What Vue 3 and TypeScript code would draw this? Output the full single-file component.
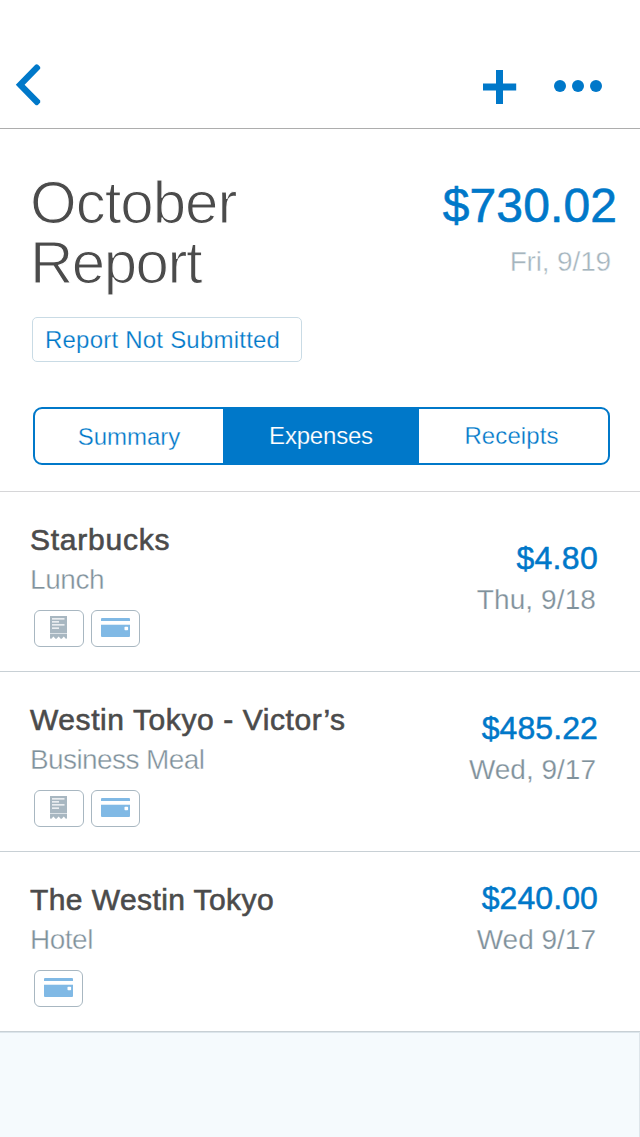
<script setup lang="ts">
import { ref } from 'vue'

interface Label {
  text: string
  tracking: number
}

interface Expense {
  name: Label
  category: Label
  amount: Label
  date: Label
  badges: ('receipt' | 'card')[]
  offset: number
}

const tabs: Label[] = [
  { text: 'Summary', tracking: 0 },
  { text: 'Expenses', tracking: -0.2 },
  { text: 'Receipts', tracking: 0.1 },
]
const active = ref(1)

const expenses: Expense[] = [
  {
    name: { text: 'Starbucks', tracking: 0.75 },
    category: { text: 'Lunch', tracking: -0.4 },
    amount: { text: '$4.80', tracking: 0.3 },
    date: { text: 'Thu, 9/18', tracking: 0.1 },
    badges: ['receipt', 'card'],
    offset: 45,
  },
  {
    name: { text: 'Westin Tokyo - Victor’s', tracking: 0.58 },
    category: { text: 'Business Meal', tracking: -0.6 },
    amount: { text: '$485.22', tracking: 0.1 },
    date: { text: 'Wed, 9/17', tracking: 0 },
    badges: ['receipt', 'card'],
    offset: 35,
  },
  {
    name: { text: 'The Westin Tokyo', tracking: 0.42 },
    category: { text: 'Hotel', tracking: -0.5 },
    amount: { text: '$240.00', tracking: 0.1 },
    date: { text: 'Wed 9/17', tracking: 0 },
    badges: ['card'],
    offset: 25,
  },
]

const spacing = (label: Label) => ({ letterSpacing: `${label.tracking}px` })
</script>

<template>
  <div class="screen">
    <header class="nav">
      <button class="back" aria-label="Back">
        <svg width="26" height="42" viewBox="0 0 26 42">
          <path d="M.8 20.700 20.300.7Q21.700-.4 23.100.7L25.200 2.900 25.200 4.800 9.600 20.700 25.200 36.500 25.200 38.400 23.100 40.700Q21.700 41.800 20.300 40.700z" fill="#0078c9" />
        </svg>
      </button>
      <div class="actions">
        <svg width="34" height="34" viewBox="0 0 34 34">
          <path d="M13 0h7v34h-7zM0 13.600h33.200v6.800H0z" fill="#0078c9" />
        </svg>
        <svg width="48" height="12" viewBox="0 0 48 12" fill="#0078c9">
          <circle cx="6" cy="6" r="6" />
          <circle cx="24" cy="6" r="6" />
          <circle cx="42" cy="6" r="6" />
        </svg>
      </div>
    </header>

    <section class="summary">
      <div class="heading">
        <h1 class="title"><span>October</span><span>Report</span></h1>
        <div class="total">
          <div class="total-amount">$730.02</div>
          <div class="total-date">Fri, 9/19</div>
        </div>
      </div>
      <div class="status">Report Not Submitted</div>
      <nav class="tabs">
        <button
          v-for="(tab, i) in tabs"
          :key="tab.text"
          class="tab"
          :class="{ active: i === active }"
          @click="active = i"
        >
          <span :style="spacing(tab)">{{ tab.text }}</span>
        </button>
      </nav>
    </section>

    <ul class="list">
      <li v-for="item in expenses" :key="item.name.text" class="row">
        <div class="info">
          <div class="name" :style="spacing(item.name)">{{ item.name.text }}</div>
          <div class="category" :style="spacing(item.category)">{{ item.category.text }}</div>
          <div class="badges">
            <span v-for="badge in item.badges" :key="badge" class="badge" :class="badge">
              <svg v-if="badge === 'receipt'" width="17" height="23" viewBox="0 0 17 23">
                <path d="M0 0h17v17H0z" fill="#a8b7c1" />
                <path d="M0 18h17v4.500l-1.200.300-2-2.300-2 2.300h-1.100L8.600 20.500l-2 2.300H5.500L3.400 20.500l-2 2.300L0 22.500z" fill="#a8b7c1" />
                <path d="M0 17h17v1H0z" fill="#dbe2e7" />
                <path d="M2 2.200h12.500v1.300H2zM2 5.300h7v1.200H2zM2 8.300h12.500v1.300H2zM2 11.500h7v1.200H2z" fill="#fff" />
              </svg>
              <svg v-else width="29" height="19" viewBox="0 0 29 19">
                <path d="M1 0h27a1 1 0 0 1 1 1v2H0V1a1 1 0 0 1 1-1z" fill="#80b9e5" />
                <path d="M0 6h29v1H0z" fill="#dcecf8" />
                <path d="M0 7h29v11a1 1 0 0 1-1 1H1a1 1 0 0 1-1-1z" fill="#80b9e5" />
                <rect x="23.500" y="8.800" width="3.600" height="3.400" rx=".8" fill="#fff" />
              </svg>
            </span>
          </div>
        </div>
        <div class="cost" :style="{ paddingTop: `${item.offset}px` }">
          <div class="amount" :style="spacing(item.amount)">{{ item.amount.text }}</div>
          <div class="date" :style="spacing(item.date)">{{ item.date.text }}</div>
        </div>
      </li>
    </ul>

    <footer class="rest"></footer>
  </div>
</template>

<style>
body {
  margin: 0;
  background: #fff;
}
</style>

<style scoped>
.screen {
  width: 640px;
  height: 1137px;
  display: flex;
  flex-direction: column;
  overflow: hidden;
  background: #fff;
  color: #4b4b4b;
  font-family: 'Liberation Sans', Arial, sans-serif;
}

svg {
  display: block;
  flex: none;
}

button {
  appearance: none;
  border: 0;
  padding: 0;
  background: none;
  font: inherit;
  color: inherit;
}

.nav {
  box-sizing: border-box;
  height: 129px;
  flex: none;
  display: flex;
  justify-content: space-between;
  align-items: flex-start;
  padding: 64px 38px 0 15px;
  border-bottom: 1px solid #adadad;
}

.actions {
  display: flex;
  align-items: center;
  gap: 37px;
  padding-top: 6px;
}

.actions svg:last-child {
  margin-top: -2px;
}

.summary {
  box-sizing: border-box;
  height: 363px;
  flex: none;
  padding: 43px 30px 0 33px;
  border-bottom: 1px solid #d6d6d8;
}

.heading {
  display: flex;
  justify-content: space-between;
  height: 145px;
  margin: 0 -7px 0 -4px;
}

.title {
  margin: 0;
  padding: 1px 0 0 1px;
  font-size: 60px;
  line-height: 60px;
  font-weight: 400;
  letter-spacing: -1px;
  -webkit-text-stroke: 1.2px #fff;
}

.title span {
  display: block;
}

.title span:last-child {
  letter-spacing: -1.5px;
}

.total {
  padding-top: 4px;
  text-align: right;
}

.total-amount {
  font-size: 48px;
  line-height: 60px;
  letter-spacing: 0.1px;
  color: #0078c9;
  -webkit-text-stroke: 0.6px #0078c9;
}

.total-date {
  margin: 6px 6px 0 0;
  font-size: 28px;
  line-height: 40px;
  letter-spacing: -0.15px;
  color: #a5b5be;
  -webkit-text-stroke: 0.4px #fff;
}

.status {
  box-sizing: border-box;
  width: 270px;
  height: 45px;
  margin-left: -1px;
  padding-left: 12px;
  border: 1px solid #c9dbe5;
  border-radius: 5px;
  font-size: 24px;
  line-height: 44px;
  letter-spacing: 0.22px;
  color: #0078c9;
  -webkit-text-stroke: 0.25px #fff;
}

.tabs {
  box-sizing: border-box;
  width: 577px;
  height: 58px;
  margin-top: 45px;
  display: grid;
  grid-template-columns: 188px 196px 1fr;
  border: 2px solid #0078c9;
  border-radius: 9px;
  overflow: hidden;
}

.tab {
  padding-top: 2px;
  font-size: 24px;
  line-height: 52px;
  color: #0078c9;
  -webkit-text-stroke: 0.3px #fff;
}

.tab:not(:first-child) {
  padding-top: 0;
}

.tab.active {
  background: #0078c9;
  color: #fff;
  -webkit-text-stroke: 0.2px #0078c9;
}

.tab:last-child {
  padding-right: 4px;
}

.list {
  margin: 0;
  padding: 0;
  list-style: none;
}

.row {
  box-sizing: border-box;
  height: 180px;
  display: flex;
  justify-content: space-between;
  padding: 0 42px 0 30px;
  border-bottom: 1px solid #c8d0d5;
}

.info {
  padding-top: 28px;
}

.name {
  font-size: 30px;
  line-height: 40px;
  -webkit-text-stroke: 0.6px #4b4b4b;
}

.category {
  font-size: 28px;
  line-height: 40px;
  color: #7f919b;
  -webkit-text-stroke: 0.4px #fff;
}

.badges {
  display: flex;
  gap: 7px;
  padding: 10px 0 0 4px;
}

.badge {
  box-sizing: border-box;
  width: 49px;
  height: 37px;
  padding: 7px 0 0 9px;
  border: 1px solid #a8b7c1;
  border-radius: 6px;
}

.badge.receipt {
  width: 50px;
  padding: 5px 0 0 15px;
}

.cost {
  text-align: right;
}

.amount {
  font-size: 32px;
  line-height: 42px;
  color: #0078c9;
  -webkit-text-stroke: 0.5px #0078c9;
}

.date {
  margin: 1px 2px 0 0;
  font-size: 28px;
  line-height: 40px;
  color: #7f919b;
  -webkit-text-stroke: 0.25px #fff;
}

.rest {
  flex: 1;
  background: #f5fafd;
  border-top: 1px solid #dce5eb;
  border-right: 1px solid #dee5ea;
}
</style>
